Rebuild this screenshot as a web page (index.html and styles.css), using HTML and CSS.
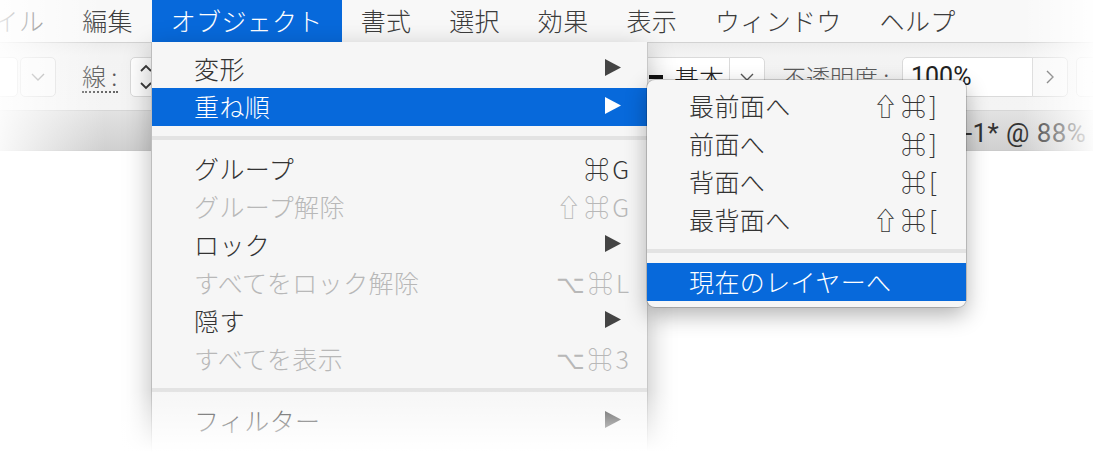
FILE: index.html
```html
<!DOCTYPE html>
<html lang="ja">

<head>
    <meta charset="UTF-8">
    <meta name="viewport" content="width=device-width, initial-scale=1.0">
    <title>オブジェクト メニュー</title>
    <link rel="stylesheet" href="styles.css">
</head>

<body>
    <div class="screen">
        <div class="menubar">
            <span class="menu-title first">ファイル</span>
            <span class="menu-title">編集</span>
            <span class="menu-title active">オブジェクト</span>
            <span class="menu-title">書式</span>
            <span class="menu-title">選択</span>
            <span class="menu-title">効果</span>
            <span class="menu-title">表示</span>
            <span class="menu-title">ウィンドウ</span>
            <span class="menu-title">ヘルプ</span>
        </div>

        <div class="toolbar">
            <span class="field field-left"></span>
            <span class="btn btn-drop">
                <svg width="14" height="8" viewBox="0 0 14 8"><polyline points="1,1 7,7 13,1" /></svg>
            </span>
            <span class="label label-stroke">線 :</span>
            <span class="field stepper">
                <svg class="step-icon" width="12" height="28" viewBox="0 0 12 28">
                    <polyline points="1,8 6,3 11,8" />
                    <polyline points="1,20 6,25 11,20" />
                </svg>
            </span>
            <span class="field stroke-style">
                <span class="stroke-line"></span>
                <span class="stroke-name">基本</span>
            </span>
            <span class="btn btn-join">
                <svg width="14" height="8" viewBox="0 0 14 8"><polyline points="1,1 7,7 13,1" /></svg>
            </span>
            <span class="label label-opacity">不透明度 :</span>
            <span class="field field-opacity">100%</span>
            <span class="btn btn-next">
                <svg width="8" height="14" viewBox="0 0 8 14"><polyline points="1,1 7,7 1,13" /></svg>
            </span>
            <span class="btn btn-more">
                <svg width="8" height="14" viewBox="0 0 8 14"><polyline points="1,1 7,7 1,13" /></svg>
            </span>
        </div>

        <div class="tabbar">
            <span class="doc-tab">名称未設定-1* @ 88% (RGB/プレビュー)</span>
        </div>

        <!-- object menu -->
        <div class="menu main-menu">
            <div class="menu-item">変形<svg class="arrow" width="18" height="19" viewBox="0 0 18 19"><path d="M1 1 L17 9.5 L1 18 Z" /></svg></div>
            <div class="menu-item selected">重ね順<svg class="arrow" width="18" height="19" viewBox="0 0 18 19"><path d="M1 1 L17 9.5 L1 18 Z" /></svg></div>
            <div class="separator"></div>
            <div class="menu-item">グループ<span class="shortcut">⌘G</span></div>
            <div class="menu-item disabled">グループ解除<span class="shortcut">⇧⌘G</span></div>
            <div class="menu-item">ロック<svg class="arrow" width="18" height="19" viewBox="0 0 18 19"><path d="M1 1 L17 9.5 L1 18 Z" /></svg></div>
            <div class="menu-item disabled">すべてをロック解除<span class="shortcut">⌥⌘L</span></div>
            <div class="menu-item">隠す<svg class="arrow" width="18" height="19" viewBox="0 0 18 19"><path d="M1 1 L17 9.5 L1 18 Z" /></svg></div>
            <div class="menu-item disabled">すべてを表示<span class="shortcut">⌥⌘3</span></div>
            <div class="separator"></div>
            <div class="menu-item">フィルター<svg class="arrow" width="18" height="19" viewBox="0 0 18 19"><path d="M1 1 L17 9.5 L1 18 Z" /></svg></div>
        </div>

        <!-- arrange submenu -->
        <div class="menu submenu">
            <div class="menu-item">最前面へ<span class="shortcut">⇧⌘]</span></div>
            <div class="menu-item">前面へ<span class="shortcut">⌘]</span></div>
            <div class="menu-item">背面へ<span class="shortcut">⌘[</span></div>
            <div class="menu-item">最背面へ<span class="shortcut">⇧⌘[</span></div>
            <div class="separator"></div>
            <div class="menu-item selected">現在のレイヤーへ</div>
        </div>

        <div class="vignette"></div>
    </div>
</body>

</html>
```

FILE: styles.css
```css
body {
    margin: 0;
    background-color: #fff;
    font-family: "Noto Sans CJK JP", "DejaVu Sans", sans-serif;
    font-weight: 300;
}

.screen {
    position: relative;
    width: 1093px;
    height: 452px;
    overflow: hidden;
    background-color: #fff;
}

/* menu bar */
.menubar {
    display: flex;
    height: 42px;
    border-bottom: 1px solid #d2d2d2;
    background-color: #f8f8f8;
    white-space: nowrap;
}

.menu-title {
    flex-shrink: 0;
    box-sizing: border-box;
    height: 42px;
    padding: 0 19px 2px;
    font-size: 25px;
    line-height: 40px;
    letter-spacing: 0.3px;
    color: #3c3c3c;
}

.menu-title.first {
    margin-left: -76px;
}

.menu-title.active {
    color: #fff;
    background-color: #0769db;
}

/* control bar */
.toolbar {
    display: flex;
    align-items: center;
    height: 67px;
    border-bottom: 1px solid #d6d6d6;
    background: linear-gradient(#ececec, #f3f3f3 12px, #f4f4f4);
    white-space: nowrap;
}

.toolbar > span {
    flex-shrink: 0;
}

.field,
.btn {
    box-sizing: border-box;
    display: flex;
    align-items: center;
    height: 40px;
    border: 1px solid #dadada;
    border-radius: 5px;
    background-color: #fff;
}

.btn {
    justify-content: center;
    background-color: #f8f8f8;
}

.btn svg,
.step-icon {
    fill: none;
    stroke: #8e8e8e;
    stroke-width: 1.4;
}

.field-left {
    width: 58px;
    margin-left: -40px;
}

.btn-drop {
    width: 36px;
    margin-left: 2px;
}

.label {
    font-size: 24px;
    line-height: 30px;
    color: #5a5a5a;
}

.label-stroke {
    width: 36px;
    margin-left: 26px;
    border-bottom: 2px dotted #666;
}

.stepper {
    width: 120px;
    margin-left: 12px;
    padding-left: 9px;
}

.step-icon {
    stroke: #3a3a3a;
    stroke-width: 1.8;
}

.stroke-style {
    width: 170px;
    margin-left: 310px;
    padding-left: 88px;
    border-radius: 5px 0 0 5px;
    font-size: 25px;
    color: #222;
}

.stroke-line {
    width: 14px;
    height: 4px;
    margin-right: 11px;
    background-color: #111;
}

.btn-join {
    width: 36px;
    margin-left: -1px;
    border-radius: 0 5px 5px 0;
    background-color: #fff;
}

.btn-join svg {
    stroke: #555;
}

.label-opacity {
    width: 113px;
    margin-left: 17px;
}

.field-opacity {
    width: 131px;
    margin-left: 7px;
    padding-left: 8px;
    border-radius: 5px 0 0 5px;
    font-family: Roboto, "Noto Sans CJK JP", sans-serif;
    font-weight: 400;
    font-size: 25px;
    color: #222;
}

.btn-next {
    width: 36px;
    margin-left: -1px;
    border-radius: 0 5px 5px 0;
}

.btn-next svg,
.btn-more svg {
    stroke: #555;
}

.btn-more {
    width: 40px;
    margin-left: 8px;
}

/* document tabs */
.tabbar {
    display: flex;
    align-items: center;
    height: 39px;
    border-bottom: 1px solid #cacaca;
    background: linear-gradient(#e2e2e2, #d0d0d0);
    white-space: nowrap;
}

.doc-tab {
    flex-shrink: 0;
    margin-left: 833px;
    font-family: Roboto, "Noto Sans CJK JP", sans-serif;
    font-weight: 400;
    font-size: 26px;
    letter-spacing: 0.4px;
    color: #333;
}

/* menus, laid over the window */
.menu {
    position: absolute;
    box-sizing: border-box;
    background-color: #f6f6f6;
    font-size: 25px;
    color: #333;
}

.main-menu {
    top: 42px;
    left: 151px;
    width: 497px;
    height: 430px;
    padding-top: 8px;
    border-left: 1px solid #bdbdbd;
    border-right: 1px solid #c8c8c8;
    box-shadow: 0 8px 26px rgba(0, 0, 0, 0.28);
}

.submenu {
    top: 80px;
    left: 647px;
    width: 319px;
    padding: 7px 0 6px;
    border-radius: 8px;
    box-shadow: 0 0 0 1px rgba(0, 0, 0, 0.16), 0 8px 22px rgba(0, 0, 0, 0.3);
}

.menu-item {
    box-sizing: border-box;
    display: flex;
    align-items: center;
    height: 38px;
    padding: 0 18px 3px 42px;
    letter-spacing: 0.4px;
    white-space: nowrap;
}

.submenu .menu-item {
    padding-right: 29px;
}

.menu-item.selected {
    color: #fff;
    background-color: #0769db;
}

.menu-item.disabled {
    color: #b8b8b8;
}

.shortcut {
    margin-left: auto;
    letter-spacing: 3px;
    margin-right: -3px;
}

.arrow {
    margin-left: auto;
    margin-right: 7px;
    fill: #444;
}

.selected .arrow {
    fill: #fff;
}

.separator {
    height: 4px;
    margin: 10px 0;
    background-color: #e3e3e3;
}

/* fade towards the edges of the shot */
.vignette {
    position: absolute;
    top: 0;
    right: 0;
    bottom: 0;
    left: 0;
    pointer-events: none;
    background:
        linear-gradient(to right, rgba(255, 255, 255, 0.88) 0, rgba(255, 255, 255, 0) 105px),
        linear-gradient(to left, rgba(255, 255, 255, 0.92) 0, rgba(255, 255, 255, 0) 70px),
        linear-gradient(to top, #fff 0, rgba(255, 255, 255, 0) 62px);
}
```
